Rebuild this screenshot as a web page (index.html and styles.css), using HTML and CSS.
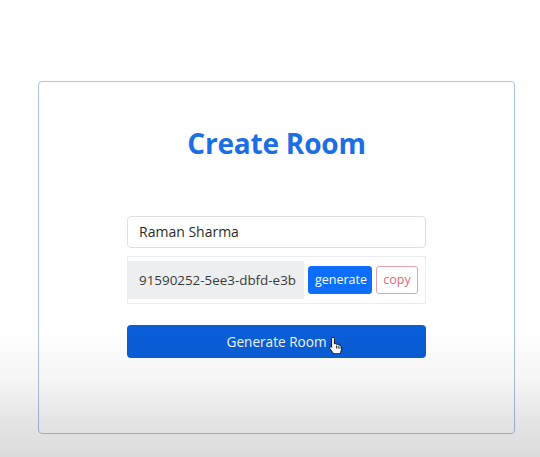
FILE: index.html
```html
<!DOCTYPE html>
<html>
<head>
<meta charset="utf-8">
<link rel="stylesheet" href="styles.css">
</head>
<body>
<div class="page">
  <div class="card">
    <h1 class="title">Create Room</h1>
    <form class="form">
      <div class="field">Raman Sharma</div>
      <div class="group">
        <div class="room-id">91590252-5ee3-dbfd-e3b</div>
        <button type="button" class="btn btn-gen">generate</button>
        <button type="button" class="btn btn-copy">copy</button>
      </div>
      <button type="button" class="btn-main">Generate Room
        <svg class="cursor" width="14" height="18" viewBox="0 0 14 18">
          <path d="M4 1.2c.8 0 1.4.6 1.4 1.4v5.2l.3-.1c.7-.3 1.5 0 1.8.6.6-.3 1.4-.1 1.7.5.6-.2 1.4 0 1.7.7l.1.2c.5-.1 1.1.2 1.3.8.3 1 .3 2.4 0 3.8-.3 1.5-.9 2.7-1.8 3.5H4.8c-.6-.6-1.3-1.6-2.2-2.7L1 12.9c-.5-.7-.4-1.5.2-1.9.6-.4 1.3-.3 1.800.3l-.4-.5V2.6C2.600 1.8 3.2 1.2 4 1.2z" fill="#fff" stroke="#111" stroke-width="1" stroke-linejoin="round"/>
          <path d="M7.5 9.5v3M9.2 10v2.6M10.9 10.6v2.2" stroke="#111" stroke-width=".8"/>
        </svg>
      </button>
    </form>
  </div>
</div>
<div class="shade"></div>
</body>
</html>
```
FILE: styles.css
```css
html, body {
  margin: 0;
  padding: 0;
  background: #ffffff;
  width: 540px;
  height: 457px;
  overflow: hidden;
  font-family: "Open Sans", "Noto Sans", sans-serif;
}
.page {
  padding: 81px 0 0 38px;
}
.card {
  box-sizing: border-box;
  width: 477px;
  height: 353px;
  border: 1.5px solid #a9c4e6;
  border-radius: 4px;
  display: flex;
  flex-direction: column;
  align-items: center;
}
.title {
  margin: 42px 0 0;
  font-size: 28px;
  line-height: 38px;
  font-weight: 700;
  color: #1b6ee6;
  letter-spacing: -0.2px;
}
.form {
  margin-top: 54px;
  width: 299px;
  display: flex;
  flex-direction: column;
}
.field {
  box-sizing: border-box;
  height: 32px;
  border: 1px solid #dcdfe3;
  border-radius: 4px;
  padding: 0 11px;
  font-size: 14px;
  line-height: 30px;
  color: #2b2b2b;
  background: #fff;
}
.group {
  box-sizing: border-box;
  margin-top: 8px;
  height: 48px;
  border: 1px solid #e9ecef;
  display: flex;
  align-items: center;
  padding: 0 7px 0 0;
  gap: 4px;
}
.room-id {
  align-self: stretch;
  margin: 4px 0;
  flex: 1;
  background: #eceeef;
  padding-left: 11px;
  font-size: 13.4px;
  line-height: 38px;
  color: #3a3a3a;
  white-space: nowrap;
}
.btn {
  box-sizing: border-box;
  height: 28px;
  border-radius: 3px;
  font-family: inherit;
  font-size: 12.5px;
  padding: 0 6px;
  line-height: 26px;
}
.btn-gen {
  background: #0d6efd;
  border: 1px solid #0d6efd;
  color: #fff;
  width: 64px;
}
.btn-copy {
  background: #fff;
  border: 1px solid #e3a3ab;
  color: #dc6a76;
  width: 42px;
}
.btn-main {
  margin-top: 21px;
  height: 33px;
  border: none;
  border-radius: 4px;
  background: #0b5ed7;
  color: #f2f6fd;
  font-family: inherit;
  font-size: 13.6px;
  position: relative;
  padding: 0;
}
.cursor {
  position: absolute;
  left: 202px;
  top: 11px;
}
.shade {
  position: fixed;
  left: 0;
  top: 0;
  width: 540px;
  height: 457px;
  pointer-events: none;
  background: linear-gradient(to bottom, rgba(0,0,0,0) 0px, rgba(0,0,0,0) 330px, rgba(0,0,0,0.04) 380px, rgba(0,0,0,0.1) 420px, rgba(0,0,0,0.14) 457px);
}
```
